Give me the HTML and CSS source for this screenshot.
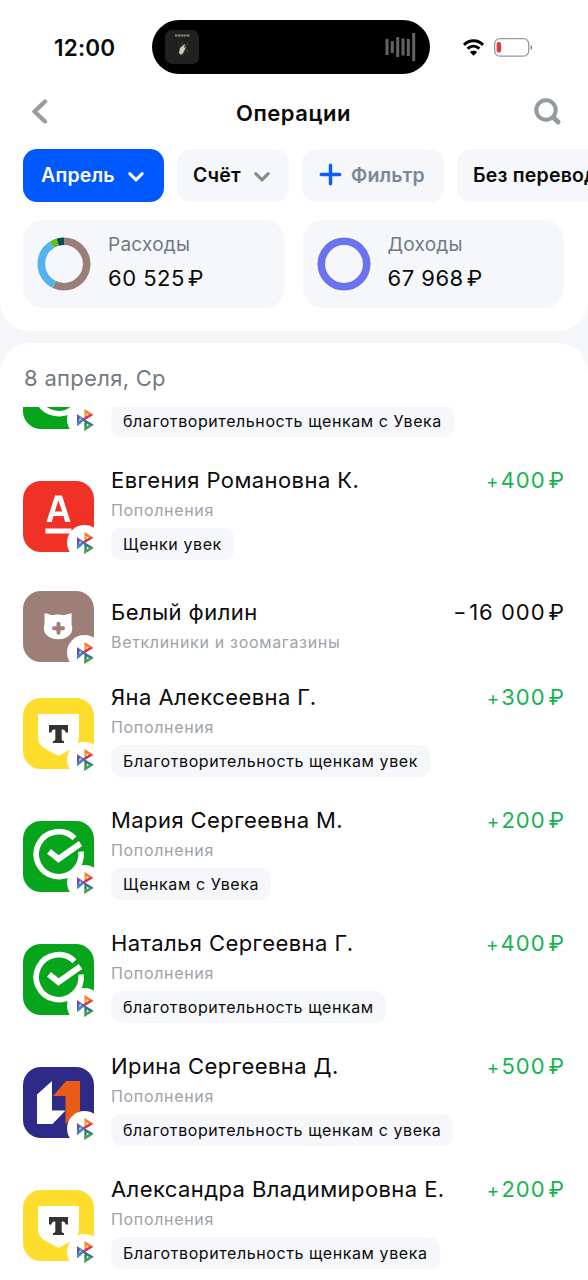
FILE: index.html
```
<!DOCTYPE html>
<html lang="ru">
<head>
<meta charset="utf-8">
<title>Операции</title>
<link rel="stylesheet" href="styles.css">
</head>
<body>
<svg class="defs" width="0" height="0">
  <symbol id="sbp" viewBox="0 0 18 22">
    <path d="M1 5v12l3.5-2.6V8.1z" fill="#6b4fa0"/>
    <path d="M1 17l8-6-3.600-1.800L1 13z" fill="#3f86c8"/>
    <path d="M1 5l8 5.6 8.5 5-3.6 2.4z" fill="#4a67b2"/>
    <path d="M8.4 0v10.6l3-1.4V4z" fill="#f0a33a"/>
    <path d="M8.4 0l9.3 5.7h-4.700l-3.3-1.700z" fill="#ee7a2c"/>
    <path d="M17.7 5.7L8.4 11.3l-1.6-1.6 6.200-4.500z" fill="#dc2b4d"/>
    <path d="M8.4 11v11l2.800-4.2v-4.800z" fill="#23806a"/>
    <path d="M8.4 22l9.3-6-4.700-.6-4 2.2z" fill="#3fa548"/>
    <path d="M3.300 9.300v2.800l1.900-1.400z" fill="#e8e9ff"/>
    <path d="M10.700 4.300v2.800l2.400-1.400z" fill="#fff0e5"/>
    <path d="M10.700 14.600v2.800l2.400-1.400z" fill="#e5f6e5"/>
  </symbol>
  <symbol id="sber" viewBox="0 0 71 71">
    <rect width="71" height="71" fill="#06a51b"/>
    <path d="M51.5 17.2A22.5 22.5 0 1 0 58 30.500" fill="none" stroke="#fff" stroke-width="5.600"/>
    <path d="M26 30.300l9.500 7.600L57.500 22.500" fill="none" stroke="#fff" stroke-width="6"/>
  </symbol>
  <symbol id="tbank" viewBox="0 0 71 71">
    <rect width="71" height="71" fill="#ffdd2d"/>
    <path d="M15 16h41v22c0 6-2 9-6 12L35.500 58 21 50c-4-3-6-6-6-12z" fill="#fff"/>
    <path d="M26 27h19v7.500h-2.500c-.3-2-1-3-3-3h-.8v9.500c0 1.500.8 2 2.300 2V45H30v-2c1.500 0 2.300-.5 2.300-2v-9.500h-.8c-2 0-2.700 1-3 3H26z" fill="#333"/>
  </symbol>
  <symbol id="alfa" viewBox="0 0 71 71">
    <rect width="71" height="71" fill="#f03226"/>
    <path fill-rule="evenodd" d="M32 14.500h7L47.500 41h-5.300l-1.700-6h-10l-1.800 6h-5.200zM35.500 19.500L31.800 30.500h7.400z" fill="#fff"/>
    <rect x="22.500" y="47.500" width="26" height="5" fill="#fff"/>
  </symbol>
  <symbol id="vet" viewBox="0 0 71 71">
    <rect width="71" height="71" fill="#9d7f77"/>
    <path d="M21.500 23.300c0-1 .8-1.300 1.600-.9l6.200 1.900c3.800-1.200 8-1.200 11.600 0l6.100-1.900c.9-.4 1.600 0 1.600.9v10.200c2.600 7.500-2.300 14.800-13.300 14.800S18.800 41 21.500 33.500z" fill="#fff"/>
    <path d="M35.500 32.700v9M31 37.200h9" stroke="#9d7f77" stroke-width="4" stroke-linecap="round"/>
  </symbol>
  <symbol id="psb" viewBox="0 0 71 71">
    <rect width="71" height="71" fill="#2d2b87"/>
    <path d="M14 27.500L29 14v29.500h13.500L29.500 57H14z" fill="#fff"/>
    <path d="M43 14h14v30L42.500 57V29H30z" fill="#ea5b16"/>
  </symbol>
</svg>

<main class="screen">
  <section class="top">
    <div class="status">
      <span class="time">12:00</span>
      <div class="island">
        <svg class="cover" viewBox="0 0 34 34">
          <rect width="34" height="34" rx="7" fill="#20201f"/>
          <path d="M10 5.500h15" stroke="#85857f" stroke-width="2" stroke-dasharray="2.500 .4"/>
          <path d="M12 14l4 4-4 6 5-3 1 6 2-6 5 2-4-5 3-6-5 3-2-4-1 5z" fill="#39372a"/>
          <path d="M14 23l1-5 5-4-1 4 2-1-3 6-2 2z" fill="#d0cbb5"/>
        </svg>
        <svg class="wave" viewBox="0 0 32 28">
          <path d="M3 6v16M8.300 8v12M13.700 4v20M19 5.500v17M24.300 6v17M29.700 0v28" stroke="#64635f" stroke-width="3"/>
        </svg>
      </div>
      <svg class="wifi" viewBox="0 0 23 18">
        <path d="M2 6.800c5.500-5.300 13.500-5.300 19 0M5.600 10.700c3.500-3.300 8.300-3.300 11.800 0" fill="none" stroke="#000" stroke-width="3"/>
        <path d="M11.500 17.800l-3.700-3.700c2.200-1.900 5.200-1.900 7.400 0z"/>
      </svg>
      <svg class="battery" viewBox="0 0 39 19">
        <rect x=".7" y=".7" width="34" height="17.400" rx="5" fill="#fff" stroke="#999" stroke-width="1.300"/>
        <rect x="2.700" y="4" width="4.300" height="10.500" rx="1.800" fill="#ef3038"/>
        <path d="M36.700 7v5c2-1 2-4 0-5z" fill="#777"/>
      </svg>
    </div>

    <header class="nav">
      <svg class="back" viewBox="0 0 17 25"><path d="M14 2.500L3.500 12.500 14 22.500" fill="none" stroke="#999da2" stroke-width="4.400" stroke-linecap="round" stroke-linejoin="round"/></svg>
      <h1 class="title">Операции</h1>
      <svg class="search" viewBox="0 0 28 28"><circle cx="12" cy="12" r="9.700" fill="none" stroke="#929ba1" stroke-width="4"/><path d="M19.500 19.500l4.500 4.500" stroke="#929ba1" stroke-width="5" stroke-linecap="round"/></svg>
    </header>

    <div class="chips">
      <div class="chip chip-active"><span>Апрель</span><svg class="chev" viewBox="0 0 16 12"><path d="M2.500 3L8 8.500 13.500 3" fill="none" stroke="currentColor" stroke-width="2.700" stroke-linecap="round" stroke-linejoin="round"/></svg></div>
      <div class="chip chip-account"><span>Счёт</span><svg class="chev chev-grey" viewBox="0 0 16 12"><path d="M2.500 3L8 8.500 13.500 3" fill="none" stroke="currentColor" stroke-width="2.700" stroke-linecap="round" stroke-linejoin="round"/></svg></div>
      <div class="chip chip-filter"><svg class="plus" viewBox="0 0 20 20"><path d="M10 2v16M2 10h16" stroke="#0a5cff" stroke-width="3" stroke-linecap="round"/></svg><span>Фильтр</span></div>
      <div class="chip chip-last"><span>Без переводов</span></div>
    </div>

    <div class="cards">
      <div class="card">
        <svg class="ring" viewBox="0 0 54 54">
          <g fill="none" stroke-width="7.600" transform="rotate(-90 27 27)">
            <circle cx="27" cy="27" r="22.700" stroke="#9a7f78" pathLength="100" stroke-dasharray="57 100"/>
            <circle cx="27" cy="27" r="22.700" stroke="#54b2ee" pathLength="100" stroke-dasharray="34 100" stroke-dashoffset="-57"/>
            <circle cx="27" cy="27" r="22.700" stroke="#5cbf24" pathLength="100" stroke-dasharray="4.500 100" stroke-dashoffset="-91"/>
            <circle cx="27" cy="27" r="22.700" stroke="#124a4b" pathLength="100" stroke-dasharray="4.500 100" stroke-dashoffset="-95.500"/>
          </g>
        </svg>
        <div class="sums"><span class="label">Расходы</span><span class="sum">60 525<i class="rub">₽</i></span></div>
      </div>
      <div class="card">
        <svg class="ring" viewBox="0 0 54 54"><circle cx="27" cy="27" r="22.700" fill="none" stroke="#6a73e9" stroke-width="7.600"/></svg>
        <div class="sums"><span class="label">Доходы</span><span class="sum">67 968<i class="rub">₽</i></span></div>
      </div>
    </div>
  </section>

  <section class="feed">
    <h2 class="date">8 апреля, Ср</h2>
    <div class="viewport">
      <div class="list">
        <article class="row">
          <div class="avatar"><svg class="logo"><use href="#sber"/></svg><span class="badge"><svg class="sbp"><use href="#sbp"/></svg></span></div>
          <div class="info"><span class="name"></span><span class="kind"></span><span class="note">благотворительность щенкам с Увека</span></div>
        </article>
        <article class="row">
          <div class="avatar"><svg class="logo"><use href="#alfa"/></svg><span class="badge"><svg class="sbp"><use href="#sbp"/></svg></span></div>
          <div class="info"><span class="name">Евгения Романовна К.</span><span class="kind">Пополнения</span><span class="note">Щенки увек</span></div>
          <div class="amount income"><i class="sign">+</i>400<i class="rub">₽</i></div>
        </article>
        <article class="row row-short">
          <div class="avatar"><svg class="logo"><use href="#vet"/></svg><span class="badge"><svg class="sbp"><use href="#sbp"/></svg></span></div>
          <div class="info"><span class="name">Белый филин</span><span class="kind">Ветклиники и зоомагазины</span></div>
          <div class="amount"><i class="sign minus">-</i>16 000<i class="rub">₽</i></div>
        </article>
        <article class="row">
          <div class="avatar"><svg class="logo"><use href="#tbank"/></svg><span class="badge"><svg class="sbp"><use href="#sbp"/></svg></span></div>
          <div class="info"><span class="name">Яна Алексеевна Г.</span><span class="kind">Пополнения</span><span class="note">Благотворительность щенкам увек</span></div>
          <div class="amount income"><i class="sign">+</i>300<i class="rub">₽</i></div>
        </article>
        <article class="row">
          <div class="avatar"><svg class="logo"><use href="#sber"/></svg><span class="badge"><svg class="sbp"><use href="#sbp"/></svg></span></div>
          <div class="info"><span class="name">Мария Сергеевна М.</span><span class="kind">Пополнения</span><span class="note">Щенкам с Увека</span></div>
          <div class="amount income"><i class="sign">+</i>200<i class="rub">₽</i></div>
        </article>
        <article class="row">
          <div class="avatar"><svg class="logo"><use href="#sber"/></svg><span class="badge"><svg class="sbp"><use href="#sbp"/></svg></span></div>
          <div class="info"><span class="name">Наталья Сергеевна Г.</span><span class="kind">Пополнения</span><span class="note">благотворительность щенкам</span></div>
          <div class="amount income"><i class="sign">+</i>400<i class="rub">₽</i></div>
        </article>
        <article class="row">
          <div class="avatar"><svg class="logo"><use href="#psb"/></svg><span class="badge"><svg class="sbp"><use href="#sbp"/></svg></span></div>
          <div class="info"><span class="name">Ирина Сергеевна Д.</span><span class="kind">Пополнения</span><span class="note">благотворительность щенкам с увека</span></div>
          <div class="amount income"><i class="sign">+</i>500<i class="rub">₽</i></div>
        </article>
        <article class="row">
          <div class="avatar"><svg class="logo"><use href="#tbank"/></svg><span class="badge"><svg class="sbp"><use href="#sbp"/></svg></span></div>
          <div class="info"><span class="name">Александра Владимировна Е.</span><span class="kind">Пополнения</span><span class="note">Благотворительность щенкам увека</span></div>
          <div class="amount income"><i class="sign">+</i>200<i class="rub">₽</i></div>
        </article>
      </div>
    </div>
  </section>
</main>
</body>
</html>
```
FILE: styles.css
```
* { box-sizing: border-box; }
html, body { margin: 0; height: 1280px; overflow: hidden; }
body { background: #f5f6fa; font-family: Inter, "Noto Sans", sans-serif; color: #0b0b0c; }
i { font-style: normal; }
svg { display: block; flex: none; }
.defs { position: absolute; }
.screen { width: 588px; height: 1280px; display: flex; flex-direction: column; gap: 12px; overflow: hidden; }

.top { height: 331px; flex: none; background: #fff; border-radius: 0 0 30px 30px; overflow: hidden; }
.status { height: 94px; display: flex; align-items: center; padding-left: 54px; }
.time { width: 98px; font-size: 22.500px; font-weight: 600; letter-spacing: .2px; line-height: 28px; padding-top: 1px; }
.island { width: 278px; height: 54px; border-radius: 27px; background: #000; display: flex; align-items: center; justify-content: space-between; padding: 0 14px 0 13px; }
.cover { width: 34px; height: 34px; }
.wave { width: 32px; height: 28px; }
.wifi { width: 23px; height: 18px; margin-left: 32px; }
.battery { width: 39px; height: 19px; margin-left: 9px; }

.nav { height: 55px; display: flex; align-items: center; justify-content: space-between; padding: 0 26px 0 31px; }
.back { width: 17px; height: 25px; margin-top: -21px; }
.title { margin: -18px 0 0 5px; font-size: 22px; font-weight: 600; letter-spacing: .55px; line-height: 28px; }
.search { width: 28px; height: 28px; margin-top: -20px; }

.chips { display: flex; gap: 13px; padding-left: 23px; }
.chip { height: 53px; flex: none; display: flex; align-items: center; border-radius: 14px; background: #f5f7fa; font-size: 19.500px; font-weight: 600; letter-spacing: .2px; padding: 0 16px 2px; white-space: nowrap; }
.chip-active { width: 141px; padding-left: 18px; background: #0059ff; color: #fff; }
.chip-account { width: 112px; }
.chip-filter { width: 142px; padding-left: 17px; color: #7d8796; }
.chip-last { width: 180px; }
.chev { width: 18px; height: 14px; margin: 5px 0 0 12px; }
.chev-grey { color: #858990; }
.plus { width: 23px; height: 23px; margin-right: 9px; }

.cards { display: flex; gap: 18px; padding: 18px 24px 0 23px; }
.card { flex: 1; height: 88px; border-radius: 20px; background: #f5f7fa; display: flex; align-items: center; gap: 17px; padding-left: 14px; }
.ring { width: 54px; height: 54px; }
.sums { display: flex; flex-direction: column; margin-top: -5px; }
.label { font-size: 19px; letter-spacing: .25px; line-height: 33px; color: #6f7a86; }
.sum { font-size: 22px; letter-spacing: .5px; line-height: 34px; }
.rub { margin-left: 3px; letter-spacing: 0; }

.feed { flex: 1; min-height: 0; background: #fff; border-radius: 30px 30px 0 0; display: flex; flex-direction: column; }
.date { height: 64px; flex: none; margin: 0; padding: 19px 24px 0; font-size: 22px; letter-spacing: .3px; line-height: 32px; font-weight: 400; color: #737a81; }
.viewport { flex: 1; min-height: 0; overflow: hidden; }
.list { margin-top: -74px; }
.row { height: 123px; display: flex; padding: 0 24px 0 23px; }
.avatar { position: relative; width: 71px; height: 71px; margin: 25px 17px 0 0; flex: none; }
.logo { width: 71px; height: 71px; border-radius: 18px; }
.badge { position: absolute; left: 44px; top: 44px; width: 35px; height: 35px; border-radius: 50%; background: #fff; display: flex; align-items: center; justify-content: center; }
.sbp { width: 18px; height: 22px; }
.info { flex: 1; display: flex; flex-direction: column; align-items: flex-start; padding-top: 8px; white-space: nowrap; }
.name { height: 32px; font-size: 22px; letter-spacing: .42px; line-height: 32px; }
.kind { height: 28px; font-size: 16px; letter-spacing: .67px; line-height: 28px; color: #9da3a9; }
.note { height: 32px; margin-top: 4px; padding: 0 12px; border-radius: 10px; background: #f5f7fa; font-size: 16px; letter-spacing: .58px; line-height: 32px; }
.amount { padding-top: 8px; font-size: 22px; letter-spacing: 1px; line-height: 32px; white-space: nowrap; }
.income { color: #17b352; }
.sign { margin-right: 1px; font-size: 19px; }
.minus { display: inline-block; transform: scaleX(1.300); margin-right: 3px; font-size: 22px; }
.row-short { height: 94px; }
.row-short .avatar { margin-top: 12px; }
.row-short .info, .row-short .amount { padding-top: 17px; }
```
